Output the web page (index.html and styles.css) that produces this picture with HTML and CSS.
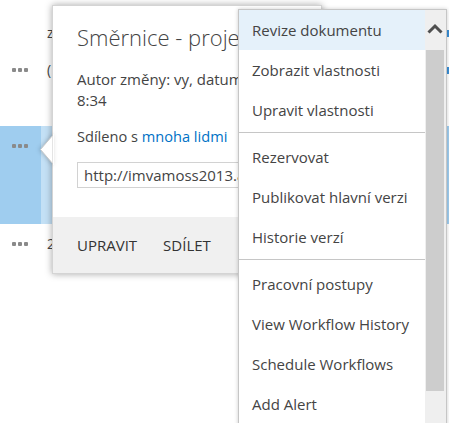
FILE: index.html
```html
<!DOCTYPE html>
<html lang="cs">
<head>
<meta charset="utf-8">
<title>Směrnice</title>
<link rel="stylesheet" href="styles.css">
</head>
<body>
<div class="page">
  <div class="list">
    <div class="row row-head"><span class="cell">z</span><span class="edge-mark"></span></div>
    <div class="row row-item"><span class="dots"><i></i><i></i><i></i></span><span class="cell">(</span><span class="edge-mark"></span></div>
    <div class="row row-selected"><span class="dots"><i></i><i></i><i></i></span><span class="sel-strip"></span></div>
    <div class="row row-item"><span class="dots"><i></i><i></i><i></i></span><span class="cell">2</span></div>
  </div>

  <div class="callout">
    <svg class="callout-arrow" width="15" height="31" viewBox="0 0 15 31">
      <polygon points="14,1 1.5,15.5 14,30" fill="#fff" stroke="#c8c8c8" stroke-width="1"/>
      <rect x="14" y="0" width="1" height="31" fill="#fff"/>
    </svg>
    <div class="callout-body">
      <h1 class="callout-title">Směrnice - projektové řízení</h1>
      <p class="callout-meta">Autor změny: vy, datum změny: 20.5.2014<br>8:34</p>
      <p class="callout-share">Sdíleno s <a href="#" class="link">mnoha lidmi</a></p>
      <div class="url-box">http://imvamoss2013.azurewebsites.net/</div>
    </div>
    <div class="callout-footer">
      <span class="action">UPRAVIT</span>
      <span class="action">SDÍLET</span>
    </div>
  </div>

  <div class="menu">
    <ul class="menu-list">
      <li class="menu-item is-hover">Revize dokumentu</li>
      <li class="menu-item">Zobrazit vlastnosti</li>
      <li class="menu-item">Upravit vlastnosti</li>
      <li class="menu-sep"></li>
      <li class="menu-item">Rezervovat</li>
      <li class="menu-item">Publikovat hlavní verzi</li>
      <li class="menu-item">Historie verzí</li>
      <li class="menu-sep"></li>
      <li class="menu-item">Pracovní postupy</li>
      <li class="menu-item">View Workflow History</li>
      <li class="menu-item">Schedule Workflows</li>
      <li class="menu-item">Add Alert</li>
    </ul>
    <div class="scrollbar">
      <div class="scroll-up">
        <svg width="16" height="12" viewBox="0 0 16 12"><polyline points="1.5,10.5 8,4 14.5,10.5" fill="none" stroke="#4f4f4f" stroke-width="3"/></svg>
      </div>
      <div class="scroll-thumb"></div>
    </div>
  </div>
</div>
</body>
</html>
```
FILE: styles.css
```css
* { box-sizing: border-box; }
html, body { margin: 0; padding: 0; }
body {
  background: #fff;
  font-family: "Open Sans", "DejaVu Sans", sans-serif;
  color: #444;
}
.page {
  position: relative;
  width: 449px;
  height: 423px;
  overflow: hidden;
}

/* background list */
.list { padding-top: 20px; }
.row {
  display: flex;
  align-items: center;
  position: relative;
  font-size: 14px;
  color: #444;
}
.row-head { height: 26px; padding-left: 47px; }
.row-item { height: 36px; margin-top: 6px; }
.row-item + .row-selected { margin-top: 38px; }
.row-selected {
  height: 98px;
  align-items: flex-start;
  background: #9fcdef;
}
.row-selected + .row-item { margin-top: 0; height: 40px; }
.dots {
  width: 47px;
  height: 40px;
  display: flex;
  align-items: center;
  gap: 2px;
  padding-left: 12px;
}
.row-item .dots { height: 36px; }
.dots i {
  display: block;
  width: 4px;
  height: 4px;
  border-radius: 1px;
  background: #8a8a8a;
}
.row-selected .dots { width: 41px; }
.sel-strip {
  width: 12px;
  height: 98px;
  background: #c3e0f5;
}
.cell { line-height: 20px; }
.edge-mark {
  position: absolute;
  right: 0;
  width: 2px;
  height: 7px;
  background: #3a8fd6;
}

/* callout */
.callout {
  position: absolute;
  left: 52px;
  top: 5px;
  width: 270px;
  height: 269px;
  background: #fff;
  border: 1px solid #d4d4d4;
  box-shadow: 0 0 7px rgba(0, 0, 0, 0.35);
  display: flex;
  flex-direction: column;
}
.callout-arrow {
  position: absolute;
  left: -14px;
  top: 128px;
  filter: drop-shadow(-1px 0 2px rgba(0,0,0,0.2));
}
.callout-body {
  flex: 1;
  padding: 17px 0 0 24px;
  overflow: hidden;
  white-space: nowrap;
}
.callout-title {
  margin: 0;
  font-size: 22px;
  font-weight: 300;
  line-height: 28px;
  color: #444;
}
.callout-meta {
  margin: 18px 0 0;
  font-size: 15px;
  line-height: 21px;
  color: #444;
}
.callout-share {
  margin: 15px 0 0;
  font-size: 14.6px;
  line-height: 21px;
}
.link { color: #0072c6; text-decoration: none; }
.url-box {
  margin-top: 15px;
  width: 240px;
  height: 26px;
  border: 1px solid #d2d2d2;
  padding-left: 6px;
  font-size: 15px;
  line-height: 24px;
  color: #444;
  overflow: hidden;
}
.callout-footer {
  height: 56px;
  background: #f0f0f0;
  display: flex;
  align-items: center;
  padding-left: 24px;
  gap: 26px;
  font-size: 15px;
  color: #333;
}

/* menu */
.menu {
  position: absolute;
  left: 238px;
  top: 9px;
  width: 209px;
  height: 440px;
  background: #fff;
  border: 1px solid #c6c6c6;
  box-shadow: 0 0 4px rgba(0, 0, 0, 0.2);
  display: flex;
}
.menu-list {
  list-style: none;
  margin: 0;
  padding: 0;
  width: 186px;
}
.menu-item {
  height: 40px;
  display: flex;
  align-items: center;
  padding-left: 13px;
  font-size: 15px;
  color: #444;
  white-space: nowrap;
}
.menu-item.is-hover { background: #e5f1fa; }
.menu-sep {
  height: 7px;
  position: relative;
}
.menu-sep::after {
  content: "";
  position: absolute;
  left: 0;
  right: 0;
  top: 2px;
  height: 1px;
  background: #c6c6c6;
}
.scrollbar {
  flex: 1;
  background: #efefef;
  display: flex;
  flex-direction: column;
  padding-left: 1px;
}
.scroll-up {
  height: 40px;
  display: flex;
  align-items: center;
  justify-content: center;
  padding-right: 2px;
  padding-bottom: 5px;
}
.scroll-thumb {
  width: 18px;
  height: 341px;
  background: #cdcdcd;
}
```
